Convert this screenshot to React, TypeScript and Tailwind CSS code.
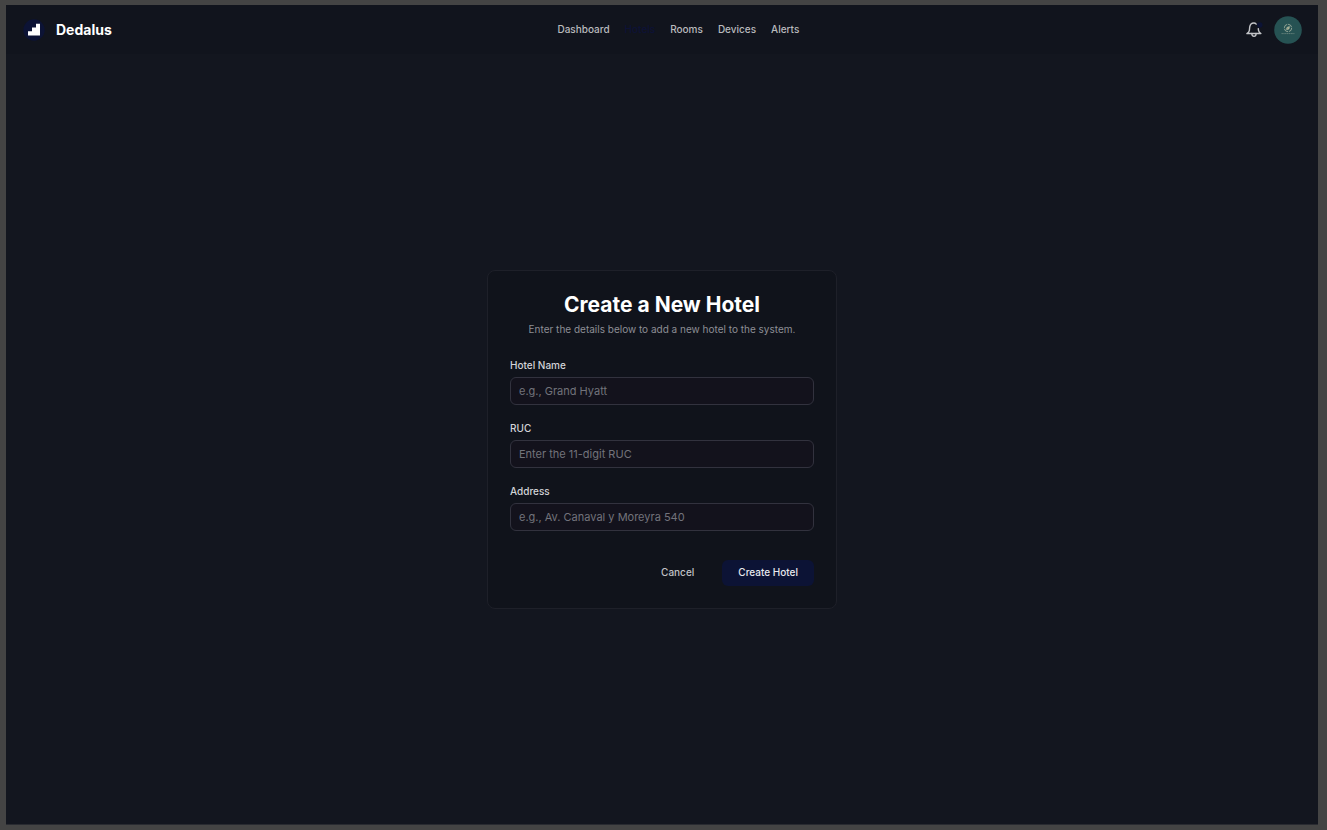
type FieldProps = { id: string; label: string; placeholder: string };

const links = ["Dashboard", "Hotels", "Rooms", "Devices", "Alerts"];

function Field({ id, label, placeholder }: FieldProps) {
  return (
    <div className="flex flex-col gap-[5px]">
      <label htmlFor={id} className="text-[10px] leading-[14px] font-medium text-[#d3d4d8]">
        {label}
      </label>
      <input
        id={id}
        type="text"
        placeholder={placeholder}
        className="h-7 w-full rounded-md border border-[#32323e] bg-[#13121c] px-2 text-[11px] text-gray-200 outline-none placeholder:text-[#72737b]"
      />
    </div>
  );
}

function Header() {
  return (
    <header className="flex h-[49px] shrink-0 items-center justify-between bg-[#11141d] pr-4 pl-[17px]">
      <a href="#" className="flex items-center gap-[11px]">
        <svg viewBox="0 0 22 22" className="size-[22px]" aria-hidden="true">
          <circle cx="11" cy="11" r="10.7" fill="#0c1335" />
          <path d="M5 16.5V12.3H9V8.5H13V4.8H17V16.5Z" fill="#fff" />
        </svg>
        <span className="text-sm font-bold text-white">Dedalus</span>
      </a>
      <nav className="flex items-center gap-[15px] text-[10px] font-medium">
        {links.map((link) => (
          <a key={link} href="#" className={link === "Hotels" ? "text-[#0d1236]" : "text-[#b9babd]"}>
            {link}
          </a>
        ))}
      </nav>
      <div className="flex items-center gap-[11px]">
        <button type="button" aria-label="Notifications" className="flex size-[18px] items-center justify-center">
          <svg viewBox="0 0 18 18" className="size-[18px]" fill="none" aria-hidden="true">
            <g stroke="#c4c5c9" strokeWidth="1.4" strokeLinecap="round" strokeLinejoin="round">
              <path d="M11.2 3.1C10.6 2.4 9.8 2 8.9 2C6.6 2 5 3.8 4.7 6.1L4.4 9.3C4.2 10.5 3.3 11.6 1.9 12.5H6.8M11 12.5H15.9C14.5 11.6 13.7 10.5 13.5 9.3L13.3 7.7" />
              <path d="M6.8 12.5C6.7 14.1 7.6 15.3 9 15.3C10.4 15.3 11.3 14.1 11 12.5Z" />
            </g>
            <circle cx="14.8" cy="4" r="2.7" fill="#0c1335" />
          </svg>
        </button>
        <button type="button" aria-label="Account" className="size-7 rounded-full">
          <svg viewBox="0 0 28 28" className="size-7" fill="none" aria-hidden="true">
            <circle cx="14" cy="14" r="13.8" fill="#265253" />
            <circle cx="14" cy="12" r="3.7" stroke="#9aaa9b" strokeWidth="0.9" strokeDasharray="4.8 0.9" />
            <path d="M12.2 13.9C11.8 11.6 13.2 10.4 15.9 10.2C15.9 12.9 14.9 14.2 12.2 13.9ZM12.2 13.9L14.6 11.5" fill="#b9b99c" stroke="#597e76" strokeWidth="0.4" />
            <path d="M7.5 17.6H20.5" stroke="#91a396" strokeWidth="0.8" strokeDasharray="1.4 0.4" opacity="0.7" />
          </svg>
        </button>
      </div>
    </header>
  );
}

export default function App() {
  return (
    <div className="flex min-h-screen flex-col bg-[#444444] pt-[5px] pr-[9px] pb-[5px] pl-1.5 font-['Inter',sans-serif]">
      <div className="flex grow flex-col border-b border-[#292b31] bg-[#13161f]">
        <Header />
        <main className="flex grow items-center justify-center">
          <form
            onSubmit={(event) => event.preventDefault()}
            className="w-full max-w-[350px] rounded-lg border border-[#1e2029] bg-[#10131b] p-[22px]"
          >
            <h1 className="text-center text-[21px] leading-6 font-bold text-white">Create a New Hotel</h1>
            <p className="mt-[5px] text-center text-[10px] leading-[14px] text-[#8d8e95]">
              Enter the details below to add a new hotel to the system.
            </p>
            <div className="mt-[22px] flex flex-col gap-4">
              <Field id="hotel-name" label="Hotel Name" placeholder="e.g., Grand Hyatt" />
              <Field id="ruc" label="RUC" placeholder="Enter the 11-digit RUC" />
              <Field id="address" label="Address" placeholder="e.g., Av. Canaval y Moreyra 540" />
            </div>
            <div className="mt-[29px] flex justify-end gap-3 text-[10px] font-medium">
              <button type="button" className="h-[26px] rounded-md px-4 text-[#c1c2c6]">
                Cancel
              </button>
              <button type="submit" className="h-[26px] rounded-md bg-[#0c1335] px-4 text-[#e8e9ed]">
                Create Hotel
              </button>
            </div>
          </form>
        </main>
      </div>
    </div>
  );
}
